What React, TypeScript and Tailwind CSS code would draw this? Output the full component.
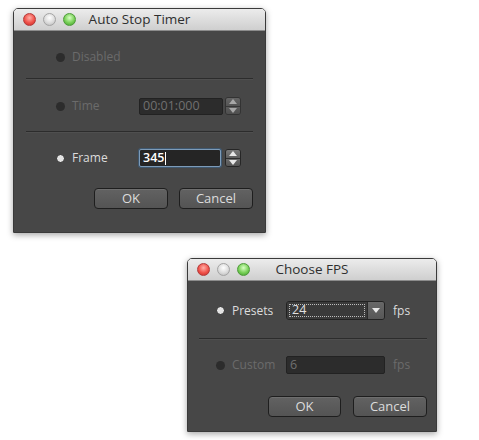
import React from 'react';

const font = { fontFamily: '"Open Sans", "Lucida Grande", "DejaVu Sans", sans-serif' };

const TrafficLights = () => (
	<div className="flex items-center gap-[7px]">
		<span className="w-[13px] h-[13px] rounded-full border border-[#b23a3a] bg-[radial-gradient(circle_at_50%_35%,#ffb0a8_0%,#f0524a_55%,#c22a26_100%)]" />
		<span className="w-[13px] h-[13px] rounded-full border border-[#a3a3a3] bg-[radial-gradient(circle_at_50%_35%,#ffffff_0%,#dcdcdc_55%,#b5b5b5_100%)]" />
		<span className="w-[13px] h-[13px] rounded-full border border-[#4e9a3a] bg-[radial-gradient(circle_at_50%_35%,#d8ffc4_0%,#78d057_55%,#3f9a2c_100%)]" />
	</div>
);

const Radio = ({ on }: { on: boolean }) =>
	on ? (
		<span className="w-[9px] h-[9px] rounded-full bg-[#e4e4e4] border border-[#2a2a2a] shrink-0" />
	) : (
		<span className="w-[9px] h-[9px] rounded-full bg-[#2c2c2c] shrink-0" />
	);

const Separator = ({ className }: { className: string }) => (
	<div className={`h-[2px] border-t border-[#2c2c2c] border-b border-b-[#4f4f4f] ${className}`} />
);

const Stepper = ({ dim }: { dim?: boolean }) => (
	<div className={`w-[16px] h-[18px] ml-[2px] flex flex-col rounded-[3px] border border-[#262626] overflow-hidden ${dim ? 'opacity-60' : ''}`}>
		<div className="flex-1 flex items-center justify-center bg-gradient-to-b from-[#7a7a7a] to-[#5e5e5e] border-b border-[#2e2e2e]">
			<svg width="8" height="5" viewBox="0 0 8 5"><path d="M0 5 L4 0 L8 5 Z" fill="#e8e8e8" /></svg>
		</div>
		<div className="flex-1 flex items-center justify-center bg-gradient-to-b from-[#6a6a6a] to-[#545454]">
			<svg width="8" height="5" viewBox="0 0 8 5"><path d="M0 0 L4 5 L8 0 Z" fill="#e8e8e8" /></svg>
		</div>
	</div>
);

const Button = ({ label, w }: { label: string; w: string }) => (
	<button className={`${w} h-[21px] rounded-[4px] border border-[#1e1e1e] bg-gradient-to-b from-[#626262] to-[#545454] text-[13px] text-[#dcdcdc] flex items-center justify-center shadow-[inset_0_1px_0_#6e6e6e]`}>
		{label}
	</button>
);

const Window = ({ title, className, children }: { title: string; className: string; children: React.ReactNode }) => (
	<div className={`flex flex-col rounded-t-[5px] border border-[#3a3a3a] shadow-[0_2px_6px_rgba(0,0,0,0.35)] overflow-hidden ${className}`} style={font}>
		<div className="relative h-[22px] shrink-0 flex items-center pl-[9px] bg-gradient-to-b from-[#ececec] to-[#cfcfcf] border-b border-[#8c8c8c]">
			<TrafficLights />
			<span className="absolute inset-0 flex items-center justify-center text-[13.5px] text-[#2f2f2f]">{title}</span>
		</div>
		<div className="flex-1 flex flex-col bg-[#474747]">{children}</div>
	</div>
);

export default function App() {
	return (
		<div className="w-[479px] h-[440px] bg-white flex flex-col">
			<Window title="Auto Stop Timer" className="ml-[13px] mt-[8px] w-[253px] h-[225px]">
				<div className="flex items-center h-[18px] mt-[17px] pl-[42px] gap-[7px]">
					<Radio on={false} />
					<span className="text-[12px] font-medium text-[#6b6b6b]">Disabled</span>
				</div>
				<Separator className="mx-[12px] mt-[12px]" />
				<div className="flex items-center h-[18px] mt-[17px] pl-[42px]">
					<Radio on={false} />
					<span className="ml-[7px] w-[67px] text-[12px] font-medium text-[#6b6b6b]">Time</span>
					<div className="w-[84px] h-[17px] bg-[#2c2c2c] border border-[#222] rounded-[2px] flex items-center px-[3px] text-[12.5px] text-[#707070]">00:01:000</div>
					<Stepper dim />
				</div>
				<Separator className="mx-[12px] mt-[16px]" />
				<div className="flex items-center h-[18px] mt-[16px] pl-[42px]">
					<Radio on />
					<span className="ml-[7px] w-[67px] text-[12px] font-medium text-[#dcdcdc]">Frame</span>
					<div className="w-[82px] h-[18px] bg-[#252525] border border-[#7d9bb8] rounded-[2px] shadow-[0_0_0_1px_#3f5870] flex items-center px-[3px] text-[12.5px] font-semibold text-white">
						345<span className="w-px h-[13px] bg-white ml-px" />
					</div>
					<span className="w-[2px]" />
					<Stepper />
				</div>
				<div className="flex justify-end gap-[11px] mt-[21px] pr-[12px]">
					<Button label="OK" w="w-[74px]" />
					<Button label="Cancel" w="w-[74px]" />
				</div>
			</Window>

			<Window title="Choose FPS" className="ml-[187px] mt-[25px] w-[250px] h-[174px]">
				<div className="flex items-center h-[19px] mt-[20px] pl-[28px]">
					<Radio on />
					<span className="ml-[7px] w-[54px] text-[12px] font-medium text-[#dcdcdc]">Presets</span>
					<div className="w-[99px] h-[19px] flex rounded-[3px] border border-[#222] overflow-hidden">
						<div className="flex-1 bg-[#3a3a3a] p-[2px]">
							<div className="h-full border border-dotted border-[#bdbdbd] flex items-center px-[2px] text-[12.5px] text-[#e0e0e0]">24</div>
						</div>
						<div className="w-[17px] border-l border-[#2a2a2a] bg-gradient-to-b from-[#686868] to-[#575757] flex items-center justify-center">
							<svg width="8" height="5" viewBox="0 0 8 5"><path d="M0 0 L4 5 L8 0 Z" fill="#e8e8e8" /></svg>
						</div>
					</div>
					<span className="ml-[8px] text-[12px] text-[#dcdcdc]">fps</span>
				</div>
				<Separator className="ml-[11px] mr-[9px] mt-[18px]" />
				<div className="flex items-center h-[18px] mt-[16px] pl-[28px]">
					<Radio on={false} />
					<span className="ml-[7px] w-[54px] text-[12px] font-medium text-[#6b6b6b]">Custom</span>
					<div className="w-[99px] h-[18px] bg-[#2c2c2c] border border-[#222] rounded-[2px] flex items-center px-[3px] text-[12.5px] text-[#707070]">6</div>
					<span className="ml-[8px] text-[12px] text-[#6b6b6b]">fps</span>
				</div>
				<div className="flex justify-end gap-[12px] mt-[22px] pr-[9px]">
					<Button label="OK" w="w-[73px]" />
					<Button label="Cancel" w="w-[74px]" />
				</div>
			</Window>
		</div>
	);
}
